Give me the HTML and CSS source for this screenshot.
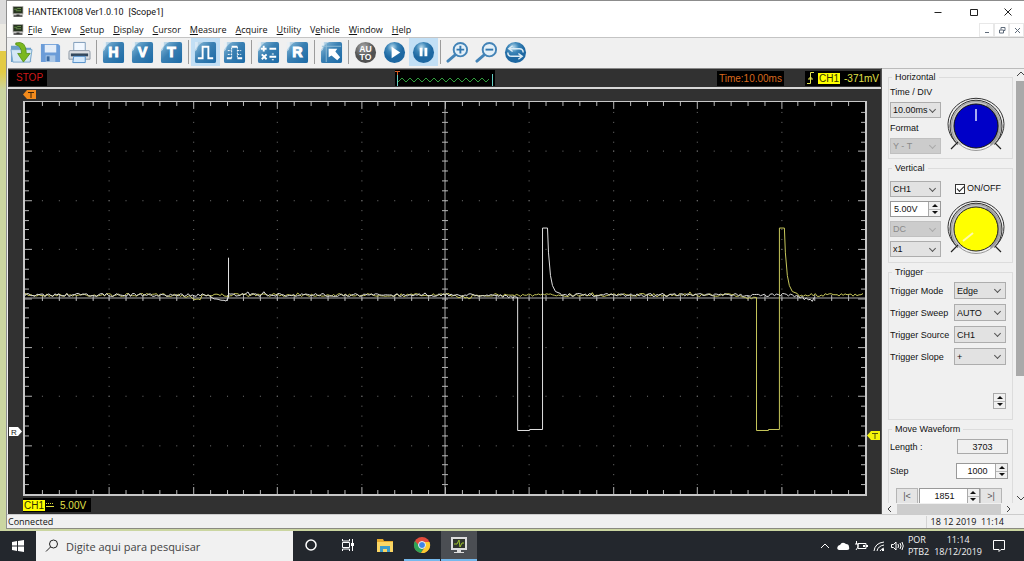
FILE: index.html
```html
<!DOCTYPE html>
<html lang="en">
<head>
<meta charset="utf-8">
<title>HANTEK1008 Ver1.0.10 [Scope1]</title>
<link rel="stylesheet" href="styles.css">
</head>
<body>
<svg class="defs" aria-hidden="true">
  <defs>
    <linearGradient id="blue" x1="0" y1="0" x2="1" y2="1"><stop offset="0" stop-color="#8fc0dd"/><stop offset=".45" stop-color="#3a80b3"/><stop offset="1" stop-color="#1c6aa6"/></linearGradient>
    <radialGradient id="ball" cx=".4" cy=".25"><stop offset="0" stop-color="#b4d8ec"/><stop offset=".5" stop-color="#3d86b8"/><stop offset="1" stop-color="#1e68a2"/></radialGradient>
    <radialGradient id="grayball" cx=".4" cy=".25"><stop offset="0" stop-color="#a8a8a8"/><stop offset="1" stop-color="#525252"/></radialGradient>
    <symbol id="tile" viewBox="0 0 24 24"><path fill="url(#blue)" d="M4 1h17q2 0 2 2v18q0 2-2 2H3q-2 0-2-2V9l3-4z"/><path fill="#e6f0f6" d="M1 1h9Q4 3 3 9L1 11z" opacity=".6"/></symbol>
    <symbol id="monitor" viewBox="0 0 16 14"><path fill="#8d8d88" d="M1 0h14v11H1z"/><path fill="#25331f" d="M2 1h12v8H2z"/><path stroke="#79a554" stroke-width="1" d="M3 4h4M7 3h5M5 6h7" fill="none"/><path fill="#333" d="M6 11h4v1h4v2H2v-2h4z"/></symbol>
    <symbol id="knob" viewBox="0 0 60 60"><path d="M11.500 48.500A26 26 0 1 1 48.500 48.500" fill="#c7c7c7" stroke="#333" stroke-width="1"/><path d="M9.500 46A28 26 0 1 1 50.500 46" fill="none" stroke="#333"/><path d="M40 10A24 24 0 0 1 44 48" fill="none" stroke="#999" stroke-width="4"/><circle cx="30" cy="30" r="24.500" fill="none" stroke="#999"/><path stroke="#222" stroke-width="1.200" d="M5 53l7-7M55 53l-6-6"/></symbol>
  </defs>
</svg>

<div class="desktop">
<main class="window">
  <header class="titlebar">
    <svg class="appicon"><use href="#monitor"/></svg>
    <h1 class="title">HANTEK1008 Ver1.0.10</h1><span class="doc">[Scope1]</span>
    <div class="winbtns">
      <button aria-label="Minimize"><svg viewBox="0 0 10 10"><path d="M1.500 5.500h7"/></svg></button>
      <button aria-label="Maximize"><svg viewBox="0 0 10 10"><path d="M1.500 2.500h7v6h-7z"/></svg></button>
      <button aria-label="Close"><svg viewBox="0 0 10 10"><path d="M1.500 1.500l7 7m0-7l-7 7"/></svg></button>
    </div>
  </header>
  <nav class="menubar">
    <svg class="appicon"><use href="#monitor"/></svg>
    <button><u>F</u>ile</button><button><u>V</u>iew</button><button><u>S</u>etup</button><button><u>D</u>isplay</button><button><u>C</u>ursor</button><button><u>M</u>easure</button><button><u>A</u>cquire</button><button><u>U</u>tility</button><button>V<u>e</u>hicle</button><button><u>W</u>indow</button><button><u>H</u>elp</button>
    <div class="mdi">
      <button aria-label="Minimize document"><svg viewBox="0 0 10 10"><path d="M3 7.500h4"/></svg></button>
      <button aria-label="Restore document"><svg viewBox="0 0 10 10"><path d="M2.500 5h4v3h-4zM4 4.500V2.500h4v3H7"/></svg></button>
      <button aria-label="Close document"><svg viewBox="0 0 10 10"><path d="M3 3l5 5m0-5l-5 5"/></svg></button>
    </div>
  </nav>
  <div class="toolbar">
    <button aria-label="Open"><svg viewBox="0 0 24 24"><path fill="#6ca0ca" d="M1 5h8l2 2h11v15H1z"/><path fill="#d4e7f5" stroke="#79a8cd" d="M1 9h22l-2 13H3z"/><path fill="#7bb81e" stroke="#4e8a10" stroke-width=".8" d="M6 2q11-3 11 11h4l-7 9-6-9h4q0-8-6-9z"/></svg></button>
    <button aria-label="Save"><svg viewBox="0 0 24 24"><path fill="#6b9cd8" d="M2 3h18l2 2v17H2z"/><path fill="#e4edf8" d="M6 4h12v8H6z"/><path fill="#a9c6e6" d="M7 15h10v7H7z"/><path fill="#37679f" d="M8 16h3v5H8z"/></svg></button>
    <button aria-label="Print"><svg viewBox="0 0 24 24"><path fill="#f2f8ff" stroke="#7d9bb9" d="M6 1.500h12v9H6z"/><path fill="#d9dde1" stroke="#8d99a6" d="M2 10h20q1 0 1 2v7H1v-7q0-2 1-2z"/><path fill="#34485c" d="M3 13h18v3H3z"/><path fill="#d4e9fc" stroke="#4e8cc8" d="M6 16h12v6.500H5z"/></svg></button>
    <i class="sep"></i>
    <button aria-label="Horizontal"><svg viewBox="0 0 24 24"><use href="#tile"/><text x="12" y="17">H</text></svg></button>
    <button aria-label="Vertical"><svg viewBox="0 0 24 24"><use href="#tile"/><text x="12" y="17">V</text></svg></button>
    <button aria-label="Trigger"><svg viewBox="0 0 24 24"><use href="#tile"/><text x="12" y="17">T</text></svg></button>
    <i class="sep"></i>
    <button class="on" aria-label="Single pulse"><svg viewBox="0 0 24 24"><use href="#tile"/><path class="w" d="M4 18h5V6h6v12h5"/></svg></button>
    <button aria-label="Dual pulse"><svg viewBox="0 0 24 24"><use href="#tile"/><path class="w" d="M4 18h5m0-12h6m0 12h5"/><path class="w dash" d="M9 18V6M15 6v12M5 10h4M5 14h4M15 10h4M15 14h4"/></svg></button>
    <i class="sep"></i>
    <button aria-label="Math"><svg viewBox="0 0 24 24"><use href="#tile"/><path class="w" d="M4 8h6M7 5v6M13 8h7M5 14l5 5m0-5l-5 5M13 16.500h7M16.500 13v1m0 5v1"/></svg></button>
    <button aria-label="Reference"><svg viewBox="0 0 24 24"><use href="#tile"/><text x="12" y="17">R</text></svg></button>
    <i class="sep"></i>
    <button aria-label="Cursor"><svg viewBox="0 0 24 24"><use href="#tile"/><path stroke="#8fbcd6" d="M2 5.500h20M6.500 2v20"/><path fill="#fff" d="M9 8h9l-2 3 5 6-3 3-6-5-3 2z"/></svg></button>
    <i class="sep"></i>
    <button aria-label="Auto"><svg viewBox="0 0 24 24"><circle cx="12" cy="12" r="11" fill="url(#grayball)"/><text class="auto" x="12" y="11">AU</text><text class="auto" x="12" y="20">TO</text></svg></button>
    <button aria-label="Run"><svg viewBox="0 0 24 24"><circle cx="12" cy="12" r="11" fill="url(#ball)"/><path fill="#fff" d="M9 6l9 6-9 6z"/></svg></button>
    <button class="on" aria-label="Pause"><svg viewBox="0 0 24 24"><circle cx="12" cy="12" r="11" fill="url(#ball)"/><path fill="#fff" d="M8 7h3v9H8zM13 7h3v9h-3z"/></svg></button>
    <i class="sep"></i>
    <button aria-label="Zoom in"><svg viewBox="0 0 24 24"><path stroke="#4484b7" stroke-width="3" stroke-linecap="round" d="M2 21l7-6"/><circle class="lens" cx="15" cy="9" r="7"/><path stroke="#3377ae" stroke-width="2" d="M11 9h8M15 5v8"/></svg></button>
    <button aria-label="Zoom out"><svg viewBox="0 0 24 24"><path stroke="#4484b7" stroke-width="3" stroke-linecap="round" d="M2 21l7-6"/><circle class="lens" cx="15" cy="9" r="7"/><path stroke="#3377ae" stroke-width="2" d="M11 9h8"/></svg></button>
    <button aria-label="Refresh"><svg viewBox="0 0 24 24"><circle cx="12" cy="12" r="11" fill="url(#ball)"/><path fill="none" stroke="#dcecf5" stroke-width="1.500" d="M20 12q0-4-4-4H6m3-3L5 8l4 3M4 12q0 4 4 4h10m-3-3l4 3-4 3"/></svg></button>
  </div>

  <div class="work">
    <section class="scope" aria-label="Oscilloscope">
      <div class="readout">
        <span class="stop">STOP</span>
        <svg class="overview" viewBox="0 0 100 16"><path fill="#000" d="M0 0h100v16H0z"/><path fill="none" stroke="#2f9d3c" d="M3 12l4-4 4 4 4-4 4 4 4-4 4 4 4-4 4 4 4-4 4 4 4-4 4 4 4-4 4 4 4-4 4 4 4-4 4 4 4-4 4 4 4-4 4 4 3-3"/><path stroke="#65cfc4" d="M2.500 4v12M97.500 4v12"/><path stroke="#d35b24" d="M0 1.500h5M2.500 1v4"/></svg>
        <div class="right-readouts">
          <span class="time">Time:10.00ms</span>
          <span class="trig"><svg viewBox="0 0 10 14"><path fill="none" stroke="#e6e650" d="M1 12.500h3.500v-11H8M2 8h5M3 7h3"/></svg><b>CH1</b><em>-371mV</em></span>
        </div>
      </div>
      <div class="stage">
        <svg class="mark-t" viewBox="0 0 14 9"><path fill="#f28a1c" d="M0 4.500L4 0h9v9H4z"/><path stroke="#3d2408" d="M5 2.500h6M8 2v6"/></svg>
        <svg class="mark-r" viewBox="0 0 14 9"><path fill="#fff" d="M0 0h9l4 4.500L9 9H0z"/><text x="2" y="8">R</text></svg>
        <svg class="mark-l" viewBox="0 0 14 9"><path fill="#f4f40a" d="M0 4.500L4 0h9v9H4z"/><path stroke="#55550a" d="M5 2.500h6M8 2v6"/></svg>
        <svg class="plot" id="plot" viewBox="0 0 844 395" preserveAspectRatio="none"></svg>
      </div>
      <div class="channel"><span><b>CH1</b><svg viewBox="0 0 8 6"><path stroke="#dede40" d="M0 4.500h8"/><path stroke="#dede40" stroke-dasharray="1 1" d="M0 1.500h8"/></svg><em>5.00V</em></span></div>
    </section>

    <aside class="side">
      <div class="panels">
        <fieldset class="two horizontal">
          <legend>Horizontal</legend>
          <div class="col">
            <label for="tdiv">Time / DIV</label>
            <span class="sel"><select id="tdiv"><option>10.00ms</option></select></span>
            <label for="fmt">Format</label>
            <span class="sel off"><select id="fmt" disabled><option>Y - T</option></select></span>
          </div>
          <svg class="knob" viewBox="0 0 60 60"><use href="#knob"/><circle cx="30" cy="30" r="22" fill="#0000c8" stroke="#111"/><path stroke="#dfe3ff" stroke-width="1.500" d="M30 13v12"/></svg>
        </fieldset>
        <fieldset class="two vertical">
          <legend>Vertical</legend>
          <div class="col">
            <span class="sel"><select aria-label="Channel"><option>CH1</option></select></span>
            <span class="spin"><input type="text" aria-label="Volts per division" value="5.00V"><span class="arrows"><button aria-label="Up"></button><button aria-label="Down"></button></span></span>
            <span class="sel off"><select aria-label="Coupling" disabled><option>DC</option></select></span>
            <span class="sel"><select aria-label="Probe"><option>x1</option></select></span>
          </div>
          <div class="col right">
            <label class="check"><input type="checkbox" checked>ON/OFF</label>
            <svg class="knob" viewBox="0 0 60 60"><use href="#knob"/><circle cx="30" cy="30" r="22" fill="#ffff00" stroke="#222"/><path stroke="#fff9b0" stroke-width="2" d="M17 42l10-8"/></svg>
          </div>
        </fieldset>
        <fieldset class="trigger">
          <legend>Trigger</legend>
          <label for="tm">Trigger Mode</label><span class="sel"><select id="tm"><option>Edge</option></select></span>
          <label for="tw">Trigger Sweep</label><span class="sel"><select id="tw"><option>AUTO</option></select></span>
          <label for="ts">Trigger Source</label><span class="sel"><select id="ts"><option>CH1</option></select></span>
          <label for="tl">Trigger Slope</label><span class="sel"><select id="tl"><option>+</option></select></span>
          <span class="arrows level"><button aria-label="Level up"></button><button aria-label="Level down"></button></span>
        </fieldset>
        <fieldset class="move">
          <legend>Move Waveform</legend>
          <div class="line"><label for="len">Length :</label><input class="len" id="len" type="text" value="3703" readonly></div>
          <div class="line"><label for="step">Step</label><span class="spin"><input id="step" type="text" value="1000"><span class="arrows"><button aria-label="Up"></button><button aria-label="Down"></button></span></span></div>
          <div class="line pos"><button class="end">|&lt;</button><span class="spin"><input type="text" aria-label="Position" value="1851"><span class="arrows"><button aria-label="Up"></button><button aria-label="Down"></button></span></span><button class="end">&gt;|</button></div>
        </fieldset>
      </div>
      <div class="vscroll"><svg viewBox="0 0 8 8"><path d="M1 6l4-4 4 4"/></svg><i></i><svg viewBox="0 0 8 8"><path d="M1 2l4 4 4-4"/></svg></div>
      <div class="hscroll"><svg viewBox="0 0 8 8"><path d="M5 1L2 4l3 3"/></svg><i></i><svg viewBox="0 0 8 8"><path d="M3 1l3 3-3 3"/></svg></div>
    </aside>
  </div>

  <footer class="status"><span>Connected</span><time>18 12 2019&nbsp; 11:14</time></footer>
</main>
</div>

<div class="taskbar">
  <button class="start" aria-label="Start"><svg viewBox="0 0 14 14"><path fill="#fff" d="M1 3l5-1v4.500H1zM7 2l6-1v5.500H7zM1 7.500h5V12l-5-1zM7 7.500h6V13l-6-1z"/></svg></button>
  <label class="search"><svg viewBox="0 0 14 14"><circle cx="8.500" cy="5" r="4" fill="none" stroke="#222"/><path stroke="#222" d="M5.500 8L1 12.500"/></svg><input type="text" aria-label="Search" placeholder="Digite aqui para pesquisar"></label>
  <button class="task" aria-label="Cortana"><svg viewBox="0 0 18 18"><circle cx="9" cy="9" r="5" fill="none" stroke="#fff" stroke-width="1.500"/></svg></button>
  <button class="task" aria-label="Task view"><svg viewBox="0 0 18 18"><path fill="none" stroke="#fff" d="M3.500 6.500h7v5h-7zM3.500 3v2h7V3M3.500 15v-2h7v2M13.500 3v12"/><path fill="#fff" d="M12 7h3v3h-3z"/></svg></button>
  <button class="task" aria-label="File Explorer"><svg viewBox="0 0 18 18"><path fill="#e6a92c" d="M1 3h6l1 2h9v11H1z"/><path fill="#fbd664" d="M1 6h16v10H1z"/><path fill="#3d9cc9" d="M4 10h10v6h-3v-3H7v3H4z"/></svg></button>
  <button class="task run" aria-label="Chrome"><svg viewBox="0 0 18 18"><circle cx="9" cy="9" r="8" fill="#e24a3b"/><path fill="#2fa456" d="M2 5l5 6 4 1-3 5A8 8 0 0 1 2 5z"/><path fill="#fccb30" d="M9 6h7.500A8 8 0 0 1 8 17l4-6z"/><circle cx="9" cy="9" r="3.500" fill="#3f84e8" stroke="#f2f2f2"/></svg></button>
  <button class="task run active" aria-label="Hantek"><svg viewBox="0 0 18 18"><path fill="#ddd" d="M1 1h16v13H1zM7 14h4v2h3v1H4v-1h3z"/><path fill="#30352c" d="M3 3h12v9H3z"/><path fill="none" stroke="#9cc32c" d="M4 8h3l2-4 1 7 2-4h2"/></svg></button>
  <div class="tray">
    <svg viewBox="0 0 14 14"><path class="l" d="M3 9l4-4 4 4"/></svg>
    <svg viewBox="0 0 14 14"><path fill="#fff" d="M3 11q-3-1-1-4 1-1 2-1 2-4 6-1 3 0 3 3 1 3-2 3z"/></svg>
    <svg viewBox="0 0 14 14"><path class="l" d="M4 4.500h8v5H4z"/><path fill="#fff" d="M12 6h2v2h-2zM9 6h2v2H9z"/><path class="l" d="M2.500 2v3M1 5h3v3l-2 3"/></svg>
    <svg viewBox="0 0 14 14"><path class="l" d="M2 12Q3 4 12 3M5 12q1-5 7-6M8 12q1-2 4-3"/><path fill="#fff" d="M10 10h2v2h-2z"/></svg>
    <svg viewBox="0 0 14 14"><path class="l" d="M1.500 5.500h2L6 3v8L3.500 8.500h-2zM8 5q1 2 0 4M10 4q2 3 0 6M12 3q2.500 4 0 8"/></svg>
    <span class="lang">POR<br>PTB2</span>
    <time class="clock">11:14<br>18/12/2019</time>
    <button aria-label="Notifications"><svg viewBox="0 0 14 14"><path class="l" d="M1.500 1.500h11v9H9l-2 2v-2H1.500z"/></svg></button>
  </div>
</div>
<script src="scope.js"></script>
</body>
</html>
```
FILE: scope.js
```js
const plot = document.getElementById('plot');
const W = 844, H = 395, DX = W / 10, DY = H / 8, CX = W / 2, CY = H / 2;
const NS = 'http://www.w3.org/2000/svg';

function path(cls, d) {
  const p = document.createElementNS(NS, 'path');
  p.setAttribute('class', cls);
  p.setAttribute('d', d);
  plot.appendChild(p);
}

let dots = '', ticks = '', axes = `M${CX} 0V${H}M0 ${CY}H${W}`;
for (let row = 1; row < 8; row++)
  for (let i = 1; i < 50; i++) dots += `M${Math.round(i * DX / 5)} ${Math.round(row * DY) + .5}h1`;
for (let col = 1; col < 10; col++)
  for (let i = 1; i < 40; i++) dots += `M${Math.round(col * DX)} ${Math.round(i * DY / 5) + .5}h1`;
for (let i = 1; i < 50; i++) {
  const x = Math.round(i * DX / 5) + .5, n = i % 5 ? 4 : 7;
  ticks += `M${x} 0v${n}M${x} ${H}v-${n}M${x} ${CY - 3}v6`;
}
for (let i = 1; i < 40; i++) {
  const y = Math.round(i * DY / 5) + .5, n = i % 5 ? 4 : 7;
  ticks += `M0 ${y}h${n}M${W} ${y}h-${n}M${CX - 3} ${y}h6`;
}
path('dots', dots);
path('ticks', ticks);
path('axes', axes);

let seed = 7;
const noise = () => (seed = (seed * 16807) % 2147483647) / 2147483647 - .5;
function flat(x0, x1, dips) {
  let d = '';
  for (let x = x0; x < x1; x += 2) {
    let y = 194.5 + noise() * 3 + (noise() > .48 ? -3 : 0);
    for (const [a, b, depth] of dips)
      if (x > a && x < b) y += depth * Math.min(1, (x - a) / (b - a) * 1.3);
    d += `L${x} ${y.toFixed(1)}`;
  }
  return d;
}
const burst = (a, b) =>
  `L${a} 197V331H${a + 12}V330H${b}V127H${b + 5}L${b + 6} 152L${b + 8} 175L${b + 10} 185L${b + 13} 191L${b + 18} 193`;

path('yellow', 'M0 194' + flat(0, 734, [[155, 178, 4], [430, 450, 3], [711, 734, 3]]) + burst(735, 758) + flat(778, W, []));
path('white', 'M0 194' + flat(0, 204, [[180, 204, 5]]) + 'L204.5 197V157V193' +
  flat(206, 494, [[475, 495, 3]]) + burst(495, 520) + flat(539, 795, [[771, 795, 5]]));
```
FILE: styles.css
```css
* { box-sizing: border-box; }
body { margin: 0; height: 100vh; display: flex; flex-direction: column; overflow: hidden; background: #c8cda0; font-family: "Liberation Sans", Arial, sans-serif; font-size: 9px; color: #111; }
button, input, select { font: inherit; color: inherit; margin: 0; padding: 0; border: 0; background: none; }
button { display: grid; place-items: center; }
svg { display: block; flex: none; overflow: hidden; }
.defs { width: 0; height: 0; position: absolute; }
b { font-weight: normal; }
em { font-style: normal; }

.desktop { flex: 1; min-height: 0; padding: 0 0 2px 6px; display: flex; background: linear-gradient(#dcdcdc 0 24px, #eceae4 24px 51px, #e3cb45 51px 72px, #cbd6a1 90px); }
.window { flex: 1; min-width: 0; display: flex; flex-direction: column; background: #f0f0f0; border: 1px solid #8c8c8c; border-right: 0; border-color: #8c8c8c #8c8c8c #8a8a80 #909090; }

.titlebar, .menubar { display: flex; align-items: center; background: #fff; font-family: "Open Sans", sans-serif; }
.titlebar { height: 21px; padding-left: 5px; font-family: Roboto, sans-serif; }
.appicon { width: 12px; height: 11px; margin-right: 4px; }
.title { margin: 0; font: inherit; }
.doc { margin-left: 5px; }
.winbtns { margin-left: auto; display: flex; }
.winbtns button { width: 36px; height: 20px; }
.winbtns button:last-child { width: 32px; }
.winbtns svg { width: 10px; height: 10px; fill: none; stroke: #222; }
.menubar { height: 16px; padding-left: 5px; border-bottom: 1px solid #c4c4c4; }
.menubar > button { display: block; margin-right: 9px; white-space: nowrap; }
.menubar u { text-underline-offset: 1px; }
.mdi { margin-left: auto; display: flex; }
.mdi button { width: 15px; height: 14px; border: 1px solid #e8e8e8; }
.mdi svg { width: 10px; height: 10px; fill: none; stroke: #5f6b7a; }

.toolbar { display: flex; height: 30px; }
.toolbar button { width: 29px; height: 28px; }
.toolbar .on { background: #c2dff5; }
.toolbar svg { width: 23px; height: 23px; fill: none; }
.toolbar text { fill: #fff; font-size: 15px; font-weight: bold; text-anchor: middle; stroke: #fff; }
.toolbar .auto { font-size: 9px; stroke: none; }
.toolbar .w { stroke: #fff; stroke-width: 2; }
.toolbar .dash { stroke-width: 1; stroke-dasharray: 2 1; }
.toolbar .lens { fill: #e4f0f8; stroke: #4484b7; stroke-width: 2; }
.sep { width: 1px; height: 24px; margin: 2px 2px 0; background: #9c9c9c; }

.work { flex: 1; min-height: 0; display: flex; }
.scope { flex: 1; min-width: 0; display: flex; flex-direction: column; margin-left: 1px; background: #313131; border-top: 1px solid #888; border-right: 1px solid #555; font-size: 10px; }
.readout { height: 20px; display: grid; grid-template-columns: 1fr auto 1fr; align-items: center; border-bottom: 2px solid #d8d8d8; padding: 0 1px; }
.stop { width: 38px; padding-left: 7px; background: #000; color: #d01818; line-height: 16px; }
.overview { width: 100px; height: 16px; }
.right-readouts { display: flex; justify-content: flex-end; }
.time { width: 67px; padding-left: 2px; background: #000; color: #d8691e; line-height: 15px; margin-right: 21px; }
.trig { display: flex; align-items: center; background: #000; color: #e0e04a; line-height: 15px; padding: 0 1px; }
.trig svg { width: 10px; height: 14px; margin-right: 2px; }
.trig b, .channel b { background: #ffff00; color: #333300; line-height: 11px; padding: 0 1px; }
.trig em { margin-left: 4px; }
.stage { flex: 1; min-height: 0; display: flex; position: relative; padding: 12px 14px 0 15px; }
.plot { flex: 1; min-width: 0; height: 100%; background: #000; border: 2px solid #c8c8c8; border-width: 1px 2px 2px; }
.mark-t, .mark-r, .mark-l { position: absolute; width: 14px; height: 9px; }
.mark-t { left: 15px; top: 1px; }
.mark-r { left: 1px; top: 83%; }
.mark-l { right: 0; top: 84%; }
.mark-r text { font-size: 8px; fill: #222; }
.plot path { fill: none; }
.dots { stroke: #777; }
.ticks { stroke: #b8b8b8; }
.axes { stroke: #aaa; }
.yellow { stroke: #c9c95c; }
.white { stroke: #e2e2e2; }
.channel { height: 18px; display: flex; align-items: center; padding-left: 15px; }
.channel span { display: flex; align-items: center; width: 68px; height: 14px; background: #000; color: #e0e04a; }
.channel svg { width: 8px; height: 6px; margin: 0 6px 0 1px; }

.side { width: 142px; display: grid; grid-template: 1fr 11px / 1fr 8px; border-top: 1px solid #bbb; }
.panels { overflow: hidden; min-height: 0; display: flex; flex-direction: column; gap: 3px; padding: 2px 3px 0 6px; }
fieldset { margin: 0; min-width: 0; border: 1px solid #dcdcdc; padding: 0 4px 3px 1px; flex: none; }
legend { padding: 0 3px; margin-left: 2px; line-height: 12px; }
.two { display: flex; justify-content: space-between; }
.col { width: 51px; display: flex; flex-direction: column; gap: 4px; }
.horizontal { padding-right: 6px; padding-bottom: 2px; }
.horizontal .knob { margin-top: 13px; }
.horizontal label { line-height: 14px; }
.horizontal .col { gap: 3px; padding-top: 2px; }
.vertical .col { padding-top: 7px; }
.knob { width: 60px; height: 60px; }
.vertical .right { width: 60px; gap: 3px; margin-right: 2px; }
.check { display: flex; align-items: center; gap: 2px; line-height: 15px; padding-left: 9px; white-space: nowrap; }
.check input { appearance: none; flex: none; width: 10px; height: 10px; border: 1px solid #333; background: #fff; display: grid; place-items: center; }
.check input::after { content: ""; width: 6px; height: 3px; border: solid #222; border-width: 0 0 1px 1px; rotate: -45deg; margin-top: -2px; }
.sel { position: relative; display: block; height: 16px; background: #e2e2e2; border: 1px solid #adadad; }
.sel select { appearance: none; width: 100%; height: 14px; padding-left: 2px; display: block; opacity: 1; }
.sel::after { content: ""; position: absolute; right: 5px; top: 4px; width: 4px; height: 4px; border: solid #555; border-width: 0 1px 1px 0; rotate: 45deg; pointer-events: none; }
.off { background: #ccc; border-color: #c0c0c0; color: #8a8a8a; }
.off::after { border-color: #aaa; }
.spin { display: flex; height: 16px; border: 1px solid #999; background: #fff; }
.spin input { flex: 1; min-width: 0; width: 0; padding-left: 3px; }
.arrows { width: 12px; display: flex; flex-direction: column; background: #f0f0f0; border-left: 1px solid #aaa; }
.arrows button { flex: 1; border-bottom: 1px solid #bbb; }
.arrows button::before { content: ""; border: solid transparent; border-width: 0 3px 3px; border-bottom-color: #111; }
.arrows button + button { border: 0; }
.arrows button + button::before { rotate: 180deg; }
.trigger { display: grid; grid-template-columns: 1fr 52px; row-gap: 5px; align-items: center; padding: 4px 6px 10px 1px; }
.trigger label { white-space: nowrap; }
.trigger .sel { height: 17px; }
.trigger select { height: 15px; }
.level { grid-column: 2; justify-self: end; width: 13px; height: 16px; border: 1px solid #aaa; margin-top: 23px; }
.move { padding: 4px 4px 3px 1px; }
.line { display: flex; align-items: center; justify-content: space-between; margin-bottom: 9px; }
.line input { text-align: center; }
.len { width: 51px; height: 15px; border: 1px solid #aaa; }
.line .spin { width: 52px; }
.line.pos { padding: 0 6px; }
.pos .spin { width: 61px; }
.end { width: 22px; height: 16px; border: 1px solid #b5b5b5; background: #e4e4e4; color: #555; }
.vscroll { display: flex; flex-direction: column; justify-content: space-between; background: #f0f0f0; }
.vscroll svg, .hscroll svg { width: 8px; height: 10px; fill: none; stroke: #444; }
.vscroll i { height: 68%; background: #a9a9a9; margin: 2px 0 auto; }
.hscroll { display: flex; align-items: center; padding: 0 4px; }
.hscroll i { flex: 1; height: 10px; background: #cdcdcd; margin: 0 3px; }

.status { height: 14px; display: flex; align-items: center; justify-content: space-between; border-top: 1px solid #ccc; background: #f0f0f0; padding: 0 20px 0 1px; font: 9px/12px "Open Sans", sans-serif; }
.status time { border-left: 1px solid #d4d4d4; padding-left: 4px; }

.taskbar { height: 30px; display: flex; background: #23272d; color: #f2f2f2; font-family: "Open Sans", sans-serif; }
.start { width: 36px; }
.start svg { width: 14px; height: 14px; }
.search { flex: 0 0 257px; display: flex; align-items: center; gap: 7px; padding-left: 9px; background: #f1f1f1; color: #444; font-size: 11px; }
.search svg { width: 14px; height: 14px; }
.search input { flex: 1; min-width: 0; }
.search input::placeholder { color: #444; opacity: 1; }
.task { width: 36px; height: 30px; border-bottom: 2px solid transparent; margin-right: 1px; }
.task svg { width: 18px; height: 18px; }
.run { border-bottom-color: #76b9ed; }
.active { background: #4b4e53; }
.tray { margin-left: auto; display: flex; align-items: center; gap: 4px; padding-right: 18px; font-size: 9px; line-height: 12px; }
.tray svg { width: 14px; height: 14px; }
.tray .l { fill: none; stroke: #fff; }
.clock { text-align: center; margin: 0 6px 0 1px; }
```
